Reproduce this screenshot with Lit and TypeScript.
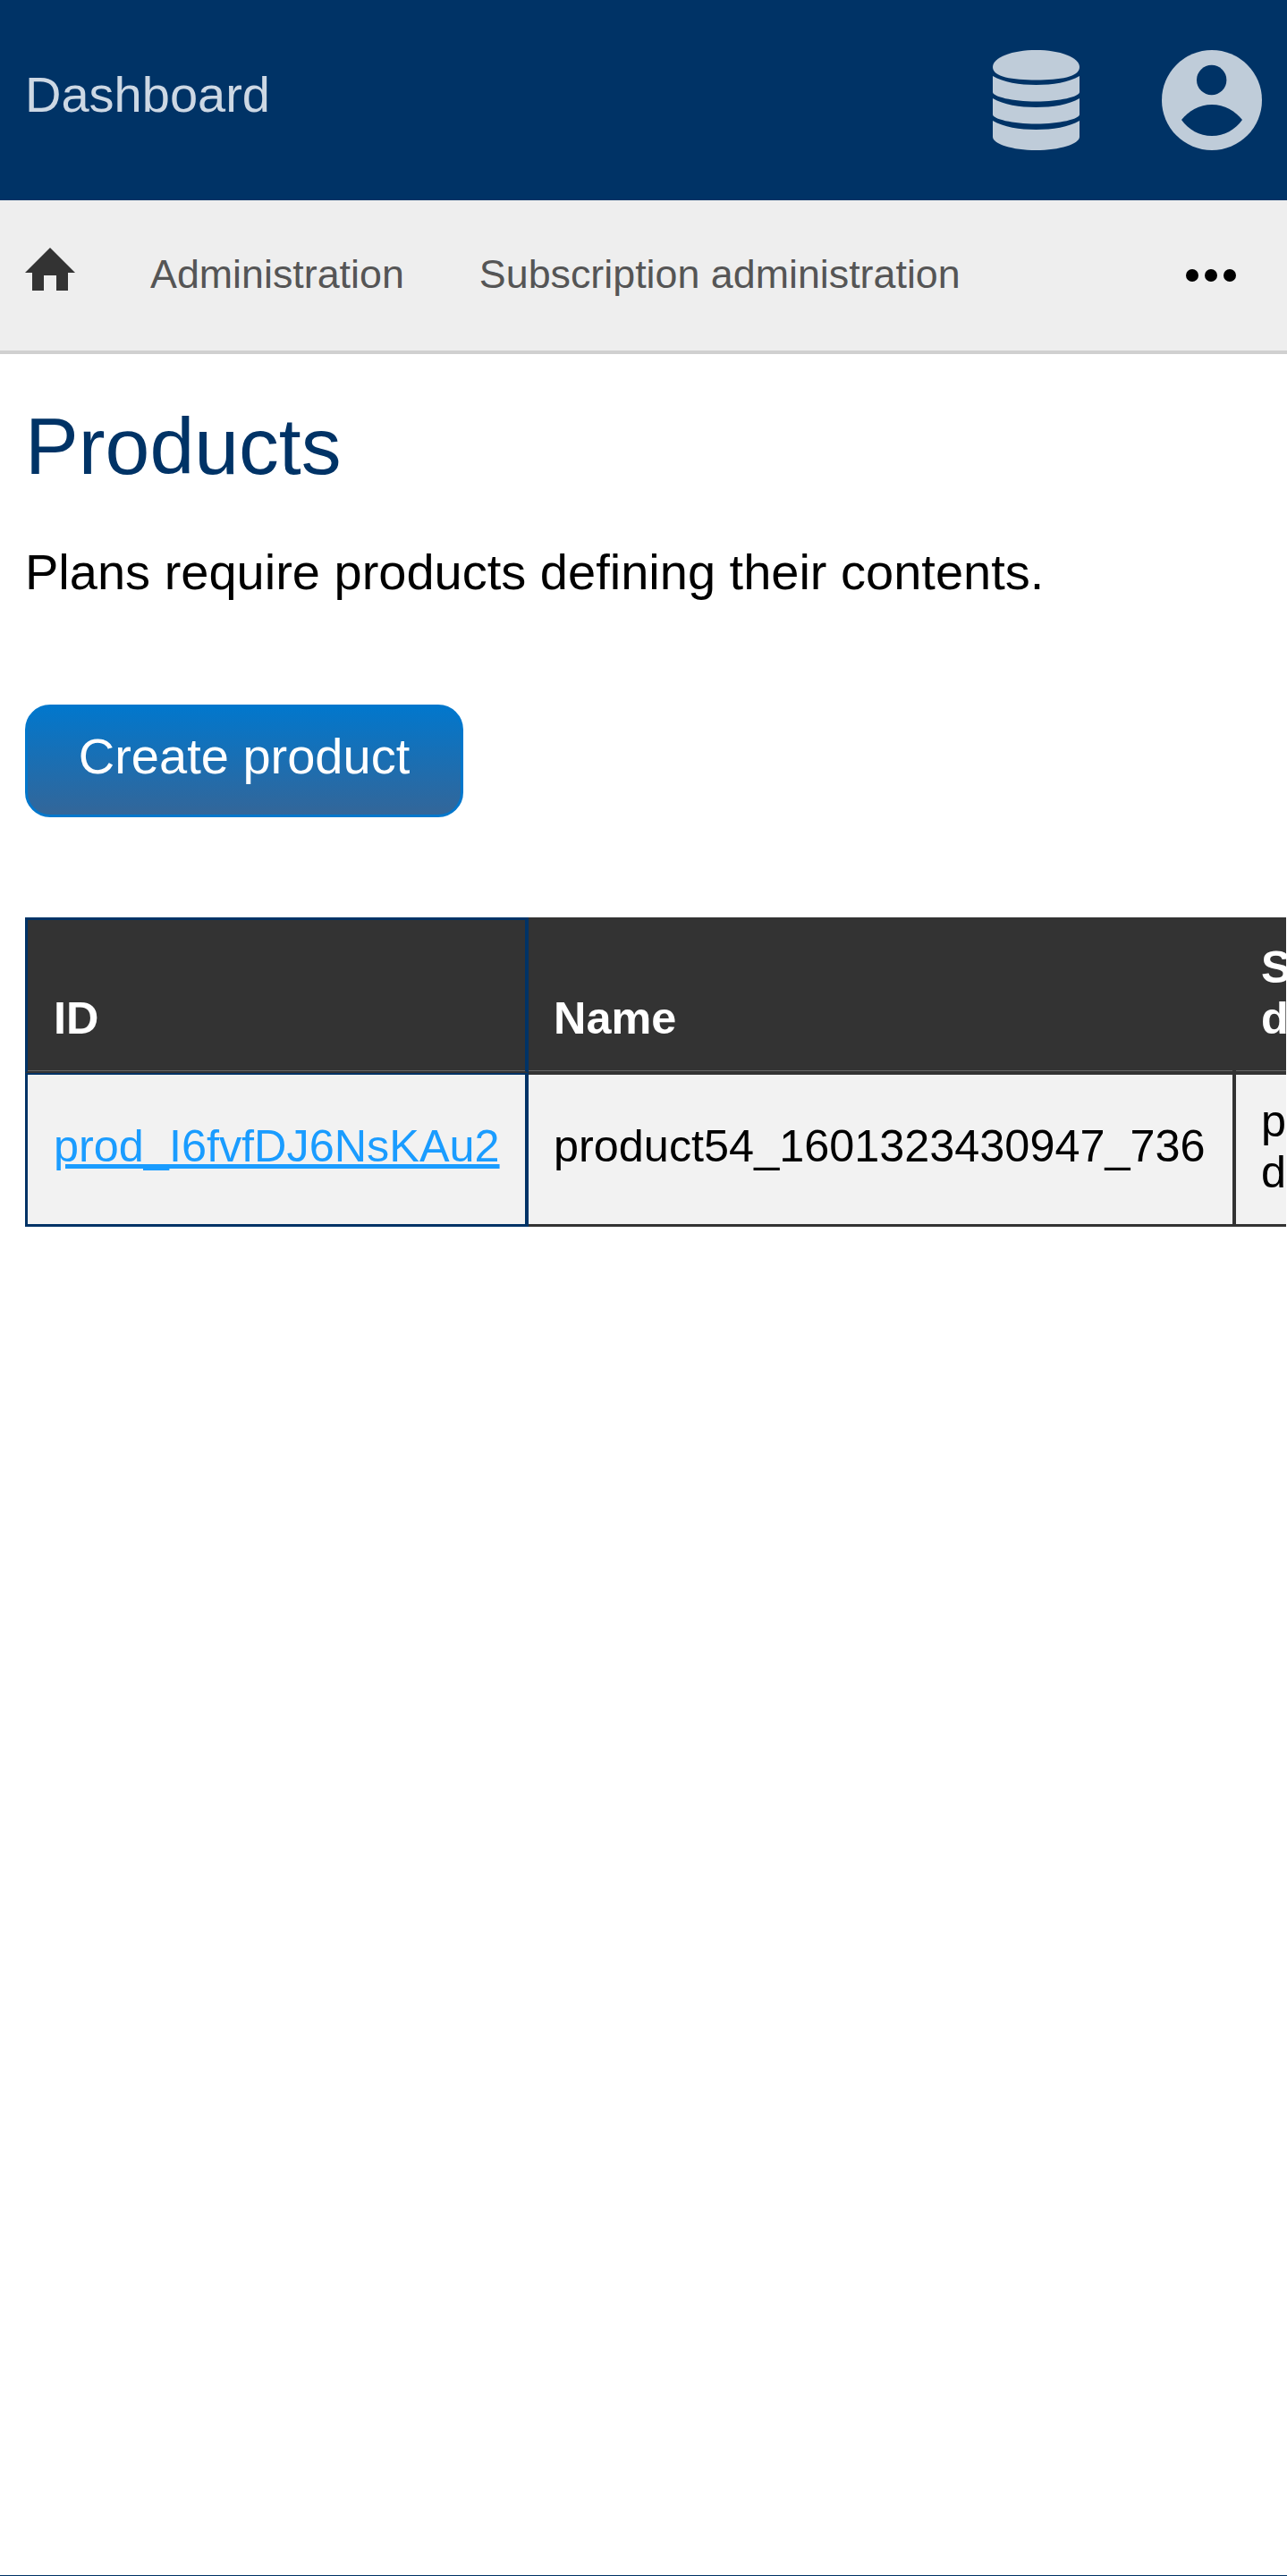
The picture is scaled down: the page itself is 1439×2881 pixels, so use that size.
import { LitElement, html, css } from "lit";
import { customElement } from "lit/decorators.js";

@customElement("app-root")
export class AppRoot extends LitElement {
  static styles = css`
    :host { display: flex; flex-direction: column; min-height: 2881px; background: #fff; font-family: "Liberation Sans", Arial, sans-serif; color: #000; box-sizing: border-box; border-bottom: 1px solid #036; overflow: hidden; }
    .top { height: 224px; background: #036; display: flex; align-items: center; padding: 0 28px; box-sizing: border-box; flex: none; }
    .brand { font-size: 56px; color: #cdd8e4; flex: 1; margin-top: -14px; }
    .db { width: 97px; height: 112px; margin-right: 92px; fill: #bfccd9; display: block; }
    .user { width: 112px; height: 112px; display: block; }
    .nav { height: 172px; background: #eee; border-bottom: 4px solid #d0d0d0; box-sizing: border-box; display: flex; align-items: center; padding: 0 28px; flex: none; color: #555; font-size: 44.8px; }
    .home { width: 56px; height: 48px; margin-right: 84px; fill: #333; display: block; margin-top: -14px; }
    .link { margin-right: 84px; margin-top: -4px; }
    .more { margin-left: auto; display: flex; gap: 7px; margin-right: 29px; }
    .more i { width: 14px; height: 14px; border-radius: 50%; background: #000; display: block; }
    .main { padding: 0 0 0 28px; width: 1438px; box-sizing: border-box; overflow: hidden; flex: 1; }
    h1 { font-size: 89.6px; font-weight: 400; color: #036; margin: 51px 0 0; line-height: 104px; }
    p { font-size: 56px; margin: 56px 0 0; line-height: 66px; }
    .btn { display: block; margin-top: 115px; width: 490px; height: 126px; box-sizing: border-box; border: 3px solid #0277cc; border-radius: 28px; background: linear-gradient(#0277cc, #336699); color: #fff; font-size: 56px; text-align: center; line-height: 110px; text-decoration: none; }
    table { border-collapse: separate; border-spacing: 0; margin-top: 112px; font-size: 50.4px; table-layout: fixed; width: 1554px; }
    .c1 { width: 563px; }
    .c2 { width: 791px; }
    .c3 { width: 200px; }
    th, td { padding: 0 28px; text-align: left; box-sizing: border-box; line-height: 57px; }
    th { background: #333; color: #fff; font-weight: 700; height: 174px; vertical-align: bottom; padding-bottom: 31px; border-top: 3px solid #333; border-right: 4px solid #333; border-bottom: 2px solid #333; box-shadow: inset 0 -1px 0 #666; }
    td { background: #f2f2f2; height: 172px; padding-bottom: 8px; border-top: 2px solid #333; border-right: 4px solid #333; border-bottom: 3px solid #333; }
    th.first { border-top-color: #036; border-left: 3px solid #036; border-right-color: #036; padding-left: 29px; }
    td.first { border-color: #036; border-left: 3px solid #036; padding-left: 29px; }
    a { color: #1a9cff; }
  `;
  render() {
    return html`
      <div class="top">
        <div class="brand">Dashboard</div>
        <svg class="db" viewBox="0 0 97 112">
          <path d="M0 19C0 8 22 0 48.5 0S97 8 97 19S75 33.5 48.5 33.5S0 30 0 19z"/>
          <path d="M0 29C12 36 30 39 48.5 39S85 36 97 29V47C97 52 75 57.5 48.5 57.5S0 52 0 47z"/>
          <path d="M0 54C12 61 30 64 48.5 64S85 61 97 54V72C97 77 75 82.5 48.5 82.5S0 77 0 72z"/>
          <path d="M0 79C12 86 30 89 48.5 89S85 86 97 79V97C97 105 75 112 48.5 112S0 105 0 97z"/>
        </svg>
        <svg class="user" viewBox="0 0 112 112">
          <circle cx="56" cy="56" r="56" fill="#bfccd9"/>
          <circle cx="55.7" cy="33.5" r="16.7" fill="#036"/>
          <path d="M22 78C30 68 42 61 56 61S82 68 90 78C82 89 70 96 56 96S30 89 22 78z" fill="#036"/>
        </svg>
      </div>
      <div class="nav">
        <svg class="home" viewBox="0 0 56 48"><path d="M28 0 56 28H48V48H35V31H21V48H8V28H0z"/></svg>
        <span class="link">Administration</span>
        <span class="link">Subscription administration</span>
        <span class="more"><i></i><i></i><i></i></span>
      </div>
      <div class="main">
        <h1>Products</h1>
        <p>Plans require products defining their contents.</p>
        <a class="btn">Create product</a>
        <table>
          <colgroup><col class="c1"/><col class="c2"/><col class="c3"/></colgroup>
          <tr><th class="first">ID</th><th>Name</th><th>Statement descriptor</th></tr>
          <tr><td class="first"><a href="#">prod_I6fvfDJ6NsKAu2</a></td><td>product54_1601323430947_736</td><td>product descriptor</td></tr>
        </table>
      </div>
    `;
  }
}
